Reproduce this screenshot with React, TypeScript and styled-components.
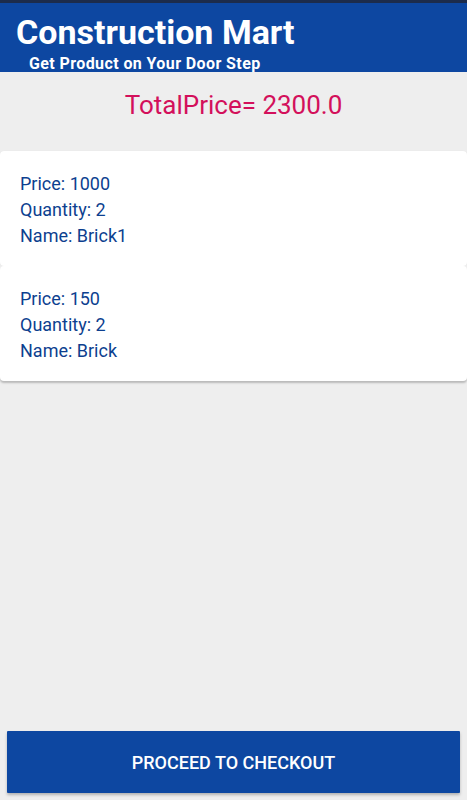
import React from 'react';
import styled, { createGlobalStyle } from 'styled-components';

const GlobalStyle = createGlobalStyle`
    html, body {
        margin: 0;
        padding: 0;
        background: #eeeeee;
        font-family: Roboto, "Noto Sans", "Liberation Sans", sans-serif;
    }
`;

const Screen = styled.div`
    height: 800px;
    display: flex;
    flex-direction: column;
    background: #eeeeee;
    border-top: 3px solid #1c2c4c;
    box-sizing: border-box;
`;

const Header = styled.header`
    background: #0d47a1;
    height: 69px;
    padding: 9px 0 0 16px;
    box-sizing: border-box;
    color: #ffffff;
`;

const Title = styled.h1`
    margin: 0;
    font-size: 34px;
    font-weight: 700;
    line-height: 40px;
`;

const Subtitle = styled.div`
    margin: 3px 0 0 13px;
    font-size: 16px;
    font-weight: 700;
    letter-spacing: 0.4px;
    line-height: 18px;
`;

const Content = styled.main`
    flex: 1;
    display: flex;
    flex-direction: column;
`;

const Total = styled.div`
    color: #d3105b;
    font-size: 26px;
    text-align: center;
    padding: 18px 0 0;
    height: 79px;
    box-sizing: border-box;
`;

const Card = styled.div<{ $last?: boolean }>`
    background: #ffffff;
    border-radius: 4px;
    padding: 20px 20px 17px;
    box-shadow: ${p => (p.$last ? '0 2px 2px rgba(0, 0, 0, 0.22)' : '0 0 1px rgba(0, 0, 0, 0.08)')};
`;

const Line = styled.div`
    color: #0d3f8f;
    font-size: 18px;
    line-height: 26px;
`;

const Checkout = styled.button`
    margin: 0 7px 7px;
    height: 62px;
    background: #0d47a1;
    color: #ffffff;
    border: none;
    border-radius: 1px;
    font-family: Roboto, "Liberation Sans", sans-serif;
    font-size: 18px;
    font-weight: 500;
    box-shadow: 0 2px 3px rgba(0, 0, 0, 0.25);
    cursor: pointer;
`;

const items = [
    { price: 1000, quantity: 2, name: 'Brick1' },
    { price: 150, quantity: 2, name: 'Brick' },
];

const App: React.FC = () => {
    return (
        <>
            <GlobalStyle />
            <Screen>
                <Header>
                    <Title>Construction Mart</Title>
                    <Subtitle>Get Product on Your Door Step</Subtitle>
                </Header>

                <Content>
                    <Total>TotalPrice= 2300.0</Total>

                    {items.map((item, i) => (
                        <Card key={item.name} $last={i === items.length - 1}>
                            <Line>Price: {item.price}</Line>
                            <Line>Quantity: {item.quantity}</Line>
                            <Line>Name: {item.name}</Line>
                        </Card>
                    ))}
                </Content>

                <Checkout>PROCEED TO CHECKOUT</Checkout>
            </Screen>
        </>
    );
};

export default App;
